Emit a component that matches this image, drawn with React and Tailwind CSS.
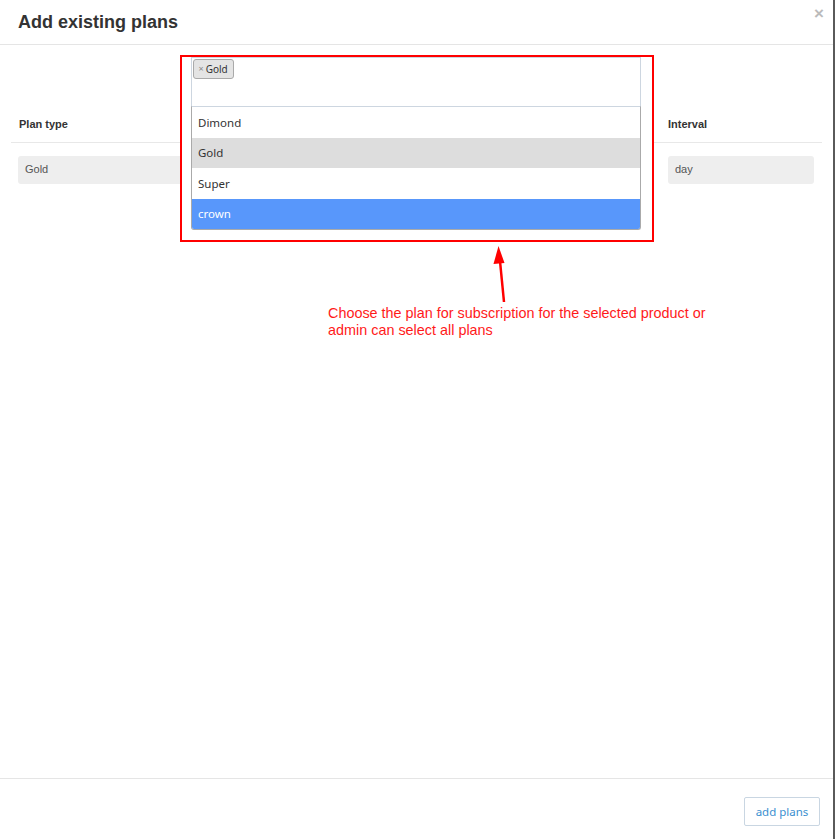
import React from 'react';

const plans = [
  { name: 'Dimond', state: '' },
  { name: 'Gold', state: 'hover' },
  { name: 'Super', state: '' },
  { name: 'crown', state: 'active' },
];

export default function App() {
  return (
    <div className="relative h-[839px] w-[835px] overflow-hidden bg-white font-['Liberation_Sans',Arial,sans-serif]">
      <div className="flex h-full w-[835px] flex-col border-r-2 border-[#5a5a5a] bg-white">
        {/* Header */}
        <div className="relative flex h-[45px] shrink-0 items-center border-b border-[#e5e5e5] px-[18px]">
          <h2 className="text-[18px] font-bold leading-none text-[#333]">Add existing plans</h2>
          <span className="absolute right-[9px] top-[1px] text-[17px] font-bold text-[#bbb]">×</span>
        </div>

        {/* Body */}
        <div className="flex-1 px-[11px] pt-[71px]">
          <div className="grid grid-cols-[182px_467px_162px]">
            <div className="border-b border-[#e8e8e8] px-[8px] pb-[9px] text-[11px] font-bold text-[#333]">Plan type</div>
            <div className="border-b border-[#e8e8e8] px-[8px] pb-[9px] text-[11px] font-bold text-[#333]">&nbsp;</div>
            <div className="border-b border-[#e8e8e8] px-[8px] pb-[9px] text-[11px] font-bold text-[#333]">Interval</div>

            <div className="px-[7px] pt-[13px]">
              <div className="flex h-[28px] items-center rounded-[3px] bg-[#eee] px-[7px] text-[11px] text-[#555]">Gold</div>
            </div>
            <div className="pt-[13px] pr-[8px]">
              <div className="h-[28px] bg-[#eee]"></div>
            </div>
            <div className="px-[8px] pt-[13px]">
              <div className="flex h-[28px] items-center rounded-[3px] bg-[#eee] px-[7px] text-[11px] text-[#555]">day</div>
            </div>
          </div>
        </div>

        {/* Footer */}
        <div className="flex h-[61px] shrink-0 items-start justify-end border-t border-[#e5e5e5] pr-[13px] pt-[18px]">
          <button className="h-[29px] w-[76px] rounded-[2px] border border-[#c9d6e2] bg-white font-['Noto_Sans',sans-serif] text-[11.5px] text-[#3a8fd0]">
            add plans
          </button>
        </div>
      </div>

      {/* Highlighted select dropdown */}
      <div className="absolute left-[180px] top-[55px] h-[187px] w-[474px] border-[2.5px] border-[#ff0000] bg-white pl-[9px] pr-[11px] font-['Noto_Sans',sans-serif]">
        <div className="flex h-[49px] items-start border border-b-0 border-[#cdd6e0] bg-white pl-[0.5px] pt-[0.5px]">
          <span className="inline-flex h-[20px] items-center gap-[2px] rounded-[3px] border border-[#aaa] bg-[#e4e4e4] px-[5px] text-[10px] leading-none text-[#333]">
            <span className="text-[9px] text-[#888]">×</span>Gold
          </span>
        </div>
        <div className="overflow-hidden rounded-b-[3px] border border-[#aaa] border-t-[#cdd6e0] text-[11.5px]">
          {plans.map((p) => (
            <div
              key={p.name}
              className={
                'flex h-[30.5px] items-center px-[6px] ' +
                (p.state === 'hover'
                  ? 'bg-[#ddd] text-[#333]'
                  : p.state === 'active'
                  ? 'bg-[#5897fb] text-white'
                  : 'bg-white text-[#333]')
              }
            >
              {p.name}
            </div>
          ))}
        </div>
      </div>

      {/* Annotation arrow */}
      <svg className="absolute left-[488px] top-[242px]" width="24" height="62" viewBox="0 0 24 62">
        <line x1="16" y1="60" x2="11.5" y2="14" stroke="#ff0000" strokeWidth="2.5" />
        <polygon points="10.5,4 5.5,22 16.5,21" fill="#ff0000" />
      </svg>

      <p className="absolute left-[328px] top-[305px] w-[400px] text-[14.4px] leading-[17px] text-[#ff1a1a]">
        Choose the plan for subscription for the selected product or admin can select all plans
      </p>
    </div>
  );
}
